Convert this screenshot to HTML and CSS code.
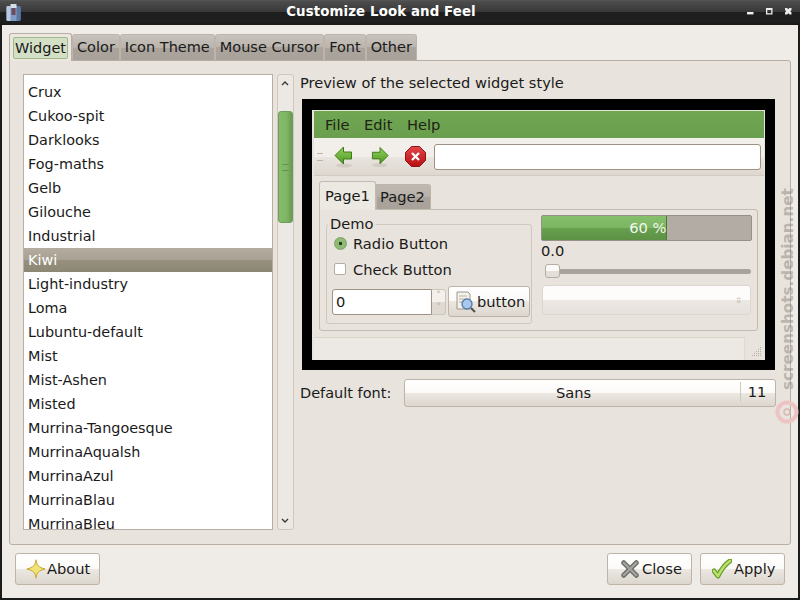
FILE: index.html
```html
<!DOCTYPE html>
<html lang="en">
<head>
<meta charset="utf-8">
<title>Customize Look and Feel</title>
<link rel="stylesheet" href="styles.css">
</head>
<body>
<div class="window">
  <header class="titlebar">
    <svg class="app-icon" width="15" height="17" viewBox="0 0 15 17"><rect x="0.5" y="2" width="14" height="15" rx="2" fill="#7f9cc4"/><rect x="0.5" y="2" width="4" height="15" rx="1" fill="#b9cbe2"/><rect x="10.5" y="2" width="4" height="15" rx="1" fill="#5a76a0"/><rect x="4.5" y="0" width="6" height="4" fill="#d5dee9"/><rect x="5.5" y="4" width="4" height="7" fill="#6e4a5c"/></svg>
    <div class="title">Customize Look and Feel</div>
    <div class="controls">
      <svg width="7" height="7" viewBox="0 0 7 7"><rect x="0" y="4" width="6.5" height="2.4" fill="#eee"/></svg>
      <svg width="7" height="7" viewBox="0 0 7 7"><path d="M0 0h6.5v6.5H0z M1.3 2v3.2h3.9V2z" fill="#eee" fill-rule="evenodd"/></svg>
      <svg width="7" height="7" viewBox="0 0 7 7"><path d="M0 0h2l1.3 1.3L4.5 0h2v2L5.2 3.3l1.3 1.2v2h-2L3.3 5.2 2 6.500H0v-2l1.300-1.200L0 2z" fill="#eee"/></svg>
    </div>
  </header>
  <main class="dialog">
    <div class="tabs">
      <div class="tab tab-active"><span class="focus">Widget</span></div>
      <div class="tab">Color</div>
      <div class="tab">Icon Theme</div>
      <div class="tab">Mouse Cursor</div>
      <div class="tab">Font</div>
      <div class="tab">Other</div>
    </div>
    <section class="page">
      <div class="listbox">
        <div class="row">Crux</div>
        <div class="row">Cukoo-spit</div>
        <div class="row">Darklooks</div>
        <div class="row">Fog-maths</div>
        <div class="row">Gelb</div>
        <div class="row">Gilouche</div>
        <div class="row">Industrial</div>
        <div class="row row-selected">Kiwi</div>
        <div class="row">Light-industry</div>
        <div class="row">Loma</div>
        <div class="row">Lubuntu-default</div>
        <div class="row">Mist</div>
        <div class="row">Mist-Ashen</div>
        <div class="row">Misted</div>
        <div class="row">Murrina-Tangoesque</div>
        <div class="row">MurrinaAqualsh</div>
        <div class="row">MurrinaAzul</div>
        <div class="row">MurrinaBlau</div>
        <div class="row">MurrinaBleu</div>
      </div>
      <div class="scrollbar">
        <svg class="arrow" width="16" height="18" viewBox="0 0 16 18"><path d="M5 10l3-3 3 3" fill="none" stroke="#3c3a36" stroke-width="1.4"/></svg>
        <div class="thumb"><span class="grip"></span></div>
        <svg class="arrow arrow-end" width="16" height="18" viewBox="0 0 16 18"><path d="M5 8l3 3 3-3" fill="none" stroke="#3c3a36" stroke-width="1.4"/></svg>
      </div>
      <div class="side">
        <div class="preview-label">Preview of the selected widget style</div>
        <div class="preview">
          <div class="demo-window">
            <div class="menubar"><span>File</span><span>Edit</span><span>Help</span></div>
            <div class="toolbar">
              <div class="handle"></div>
              <svg class="tool" width="19" height="22" viewBox="0 0 19 22"><defs><linearGradient id="go" x1="0" y1="0" x2="0" y2="1"><stop offset="0" stop-color="#96d060"/><stop offset="1" stop-color="#4a9a1e"/></linearGradient></defs><ellipse cx="10" cy="19.500" rx="8" ry="2" fill="#d2ccc4"/><path d="M1 9.500l8.500-8.500v5h8v7h-8v5z" fill="url(#go)" stroke="#3f7a16"/></svg>
              <svg class="tool tool-next" width="18" height="22" viewBox="0 0 19 22"><ellipse cx="9" cy="19.500" rx="8" ry="2" fill="#d2ccc4"/><path d="M18 9.500L9.500 1v5h-8v7h8v5z" fill="url(#go)" stroke="#3f7a16"/></svg>
              <svg class="tool tool-stop" width="21" height="21" viewBox="0 0 21 21"><defs><linearGradient id="stop" x1="0" y1="0" x2="0" y2="1"><stop offset="0" stop-color="#e2474a"/><stop offset="1" stop-color="#b80f12"/></linearGradient></defs><path d="M6.500.5h8l6 6v8l-6 6h-8l-6-6v-8z" fill="url(#stop)" stroke="#8f1214"/><path d="M7 7l7 7m0-7l-7 7" stroke="#fff" stroke-width="2.300"/></svg>
              <div class="entry"></div>
            </div>
            <div class="demo-tabs">
              <div class="demo-tab demo-tab-active">Page1</div>
              <div class="demo-tab">Page2</div>
            </div>
            <div class="demo-page">
              <fieldset class="group">
                <legend>Demo</legend>
                <label class="option"><span class="radio"></span>Radio Button</label>
                <label class="option"><span class="check"></span>Check Button</label>
                <div class="group-controls">
                  <div class="spin"><div class="spin-field">0</div><div class="spin-arrows"><i>&#708;</i><i>&#709;</i></div></div>
                  <div class="btn demo-btn">
                    <svg width="20" height="22" viewBox="0 0 20 22"><path d="M1 1h11l2 2v15H1z" fill="#f4f1ea" stroke="#9b9689"/><path d="M3 5h8M3 8h8M3 11h4" stroke="#b9b4a8"/><circle cx="11" cy="13" r="5" fill="#a9c8ee" stroke="#5c7ea8" stroke-width="1.400"/><path d="M15 17l4 4" stroke="#555" stroke-width="2.200"/></svg>
                    button
                  </div>
                </div>
              </fieldset>
              <div class="demo-right">
                <div class="progress"><div class="progress-fill" style="width:60%"><span>60 %</span></div></div>
                <div class="value">0.0</div>
                <div class="slider"><div class="slider-thumb"></div></div>
                <div class="combo"><span class="combo-arrow">&#8691;</span></div>
              </div>
            </div>
            <div class="statusbar">
              <div class="status-field"></div>
              <svg class="resize" width="12" height="12" viewBox="0 0 12 12"><path d="M10 1h1v1h-1zM8 3h1v1H8zM10 3h1v1h-1zM6 5h1v1H6zM8 5h1v1H8zM10 5h1v1h-1zM4 7h1v1H4zM6 7h1v1H6zM8 7h1v1H8zM10 7h1v1h-1zM2 9h1v1H2zM4 9h1v1H4zM6 9h1v1H6zM8 9h1v1H8zM10 9h1v1h-1z" fill="#b8b0a6"/></svg>
            </div>
          </div>
        </div>
        <div class="font-row">
          <span class="font-label">Default font:</span>
          <div class="btn font-btn"><span class="font-name">Sans</span><span class="font-size">11</span></div>
        </div>
      </div>
    </section>
    <footer class="actions">
      <div class="btn action">
        <svg width="20" height="20" viewBox="0 0 24 24"><path d="M12 1c1 7 3 9 11 11-8 2-10 4-11 11-1-7-3-9-11-11 8-2 10-4 11-11z" fill="#f2e27a" stroke="#c4a92c" stroke-width="1.200"/></svg>
        About
      </div>
      <div class="spacer"></div>
      <div class="btn action action-close">
        <svg width="18" height="18" viewBox="0 0 20 20"><path d="M3 3l14 14M17 3L3 17" stroke="#6f6f6c" stroke-width="5.500" stroke-linecap="round"/><path d="M3 3l14 14M17 3L3 17" stroke="#a3a3a0" stroke-width="2.500" stroke-linecap="round"/></svg>
        Close
      </div>
      <div class="btn action action-apply">
        <svg width="20" height="20" viewBox="0 0 20 20"><path d="M2 12l4 5c3-6 6-11 12-15" fill="none" stroke="#6e9a2c" stroke-width="5" stroke-linejoin="round" stroke-linecap="round"/><path d="M2 12l4 5c3-6 6-11 12-15" fill="none" stroke="#b6e36a" stroke-width="2.600" stroke-linejoin="round" stroke-linecap="round"/></svg>
        Apply
      </div>
    </footer>
  </main>
  <div class="watermark">screenshots.debian.net</div>
  <svg class="watermark-logo" width="26" height="26" viewBox="0 0 26 26"><circle cx="13" cy="13" r="9.500" fill="none" stroke="#ecc4c4" stroke-width="4"/><circle cx="13" cy="13" r="3" fill="none" stroke="#d8b8b4" stroke-width="1.500"/></svg>
</div>
</body>
</html>
```
FILE: styles.css
```css
* { box-sizing: border-box; }
html, body { margin: 0; padding: 0; }
body { font-family: "DejaVu Sans", sans-serif; font-size: 14.67px; color: #1a1a1a; }
.window { position: relative; width: 800px; height: 600px; background: #1c1c1c; display: flex; flex-direction: column; overflow: hidden; }

.titlebar { height: 25px; flex: none; display: flex; align-items: center; background: linear-gradient(#5a5a5a 0, #4d4d4d 1px, #383838 12px, #1f1f1f 12px, #1f1f1f 22px, #181818 100%); padding: 0 8px 0 6px; position: relative; }
.app-icon { flex: none; margin-top: -1px; }
.title { position: absolute; left: 0; right: 38px; top: 3px; text-align: center; color: #fff; font-weight: bold; font-size: 13.33px; line-height: 17px; letter-spacing: .12px; }
.controls { margin-left: auto; display: flex; gap: 12px; align-items: center; position: relative; top: -1px; }

.dialog { flex: 1; margin: 0 2px 2px; background: #efebe6; display: flex; flex-direction: column; padding: 7px 7px 0; min-height: 0; }
.tabs { display: flex; height: 28px; align-items: flex-end; flex: none; position: relative; z-index: 1; font-size: 14.5px; }
.tab { height: 26px; padding: 0 4px; line-height: 25px; background: linear-gradient(#c8c3bc, #bab4ad 50%, #aaa49d 50%, #a8a29b); border: 1px solid #bdb5ab; border-bottom: 0; border-radius: 3px 3px 0 0; white-space: nowrap; }
.tab-active { width: 63px; height: 28px; margin-bottom: -1px; padding: 3px 3px 0; line-height: 22px; background: #ece7e1; border-color: #b8aea3; }
.focus { display: block; width: 55px; height: 22px; line-height: 20px; text-align: center; background: #d4e0c6; border: 1px solid #9fb88c; border-radius: 2px; }

.page { height: 485px; flex: none; background: #e8e3dd; border: 1px solid #b8aea3; border-radius: 0 3px 3px 3px; padding: 13px 14px 13px 13px; display: flex; }
.listbox { width: 250px; height: 456px; flex: none; background: #fff; border: 1px solid #b8aea3; padding-top: 5px; overflow: hidden; }
.row { height: 24px; line-height: 25px; padding-left: 4px; white-space: nowrap; font-size: 14.4px; }
.row-selected { background: linear-gradient(#b3ac9f, #a7a093 50%, #97907f 50%, #8c8675); color: #fff; }

.scrollbar { width: 17px; height: 456px; flex: none; margin-left: 4px; background: #ece8e3; border: 1px solid #cfc7bd; border-radius: 3px; display: flex; flex-direction: column; }
.arrow { flex: none; display: block; margin-left: -1px; }
.thumb { margin: 18px 0 0; width: 15px; height: 112px; background: linear-gradient(90deg, #86bc6c, #7eb564 60%, #68994f); border: 1px solid #6e9d5a; border-radius: 3px; display: flex; align-items: center; justify-content: center; }
.grip { width: 7px; height: 7px; border-top: 1px solid #6a9155; border-bottom: 1px solid #6a9155; }
.arrow-end { margin-top: auto; }

.side { flex: 1; min-width: 0; margin-left: 6px; display: flex; flex-direction: column; }
.preview-label { height: 25px; line-height: 18px; font-size: 14.6px; white-space: nowrap; }
.preview { margin-left: 2px; width: 473px; height: 271px; background: #000; padding: 11px 10px 10px; flex: none; }
.demo-window { height: 250px; background: #e8e3dd; padding: 1px 0 0 2px; display: flex; flex-direction: column; }
.menubar { height: 27px; flex: none; background: linear-gradient(#70a552, #6a9f4e); display: flex; gap: 14.5px; padding-left: 11px; line-height: 27px; color: #1e2316; margin-right: 1px; }
.toolbar { height: 38px; flex: none; display: flex; align-items: center; background: linear-gradient(#f3f0ec, #f2efeb 50%, #e9e5df 50%, #ddd7d0); border-bottom: 1px solid #d2cbc2; margin-right: 1px; padding: 0 3px; }
.handle { width: 6px; height: 8px; margin-right: 11px; border-top: 1px solid #bdb6ac; border-bottom: 1px solid #bdb6ac; }
.tool { flex: none; }
.tool-next { margin-left: 18px; }
.tool-stop { margin-left: 16px; }
.entry { margin-left: 8px; flex: 1; height: 26px; background: #fff; border: 1px solid #9e9284; border-radius: 3px; }
.demo-tabs { display: flex; height: 28px; margin: 5px 0 0 5px; align-items: flex-end; flex: none; position: relative; z-index: 1; }
.demo-tab { width: 55px; height: 25px; padding-left: 3px; line-height: 24px; background: linear-gradient(#bfb9b2, #b6b0a9 50%, #a9a39c 50%, #a8a29b); border: 1px solid #bdb5ab; border-bottom: 0; border-radius: 0 3px 0 0; }
.demo-tab-active { width: 57px; height: 29px; margin-bottom: -1px; padding-left: 5px; line-height: 27px; background: #ece8e2; border-color: #c4bbb0; border-radius: 3px 3px 0 0; }
.demo-page { margin: 0 7px 0 5px; height: 122px; flex: none; border: 1px solid #c4bbb0; border-radius: 0 3px 3px 3px; display: flex; padding: 5px 5px 0 6px; }
.group { width: 206px; min-width: 0; height: 109px; margin: 0; padding: 0 1px 0 5px; border: 1px solid #cfc7bc; border-radius: 3px; flex: none; }
.group legend { padding: 0 2px; margin: 0 0 -3px -4px; line-height: 18px; }
.option { display: flex; align-items: center; height: 26px; padding-left: 2px; }
.radio { width: 13px; height: 13px; border-radius: 50%; margin-right: 6px; border: 1px solid #7d9f68; background: radial-gradient(circle, #2c3a20 0 1.6px, #8dbb72 2px); }
.check { width: 12px; height: 12px; margin-right: 7px; border: 1px solid #b5ada2; border-radius: 2px; background: #fff; }
.group-controls { display: flex; align-items: center; margin-top: 4px; }
.spin { width: 114px; height: 26px; display: flex; flex: none; }
.spin-field { width: 100px; background: #fff; border: 1px solid #9e9284; border-radius: 3px 0 0 3px; padding-left: 3px; line-height: 24px; }
.spin-arrows { width: 14px; border: 1px solid #cdc5ba; border-left: 0; border-radius: 0 3px 3px 0; background: linear-gradient(#f4f1ed 50%, #dfd9d2 50%); display: flex; flex-direction: column; align-items: center; font-size: 10px; line-height: 12px; color: #b8b0a6; }
.spin-arrows i { font-style: normal; height: 12px; }
.btn { display: flex; align-items: center; border: 1px solid #bdb3a7; border-radius: 3px; background: linear-gradient(#ffffff, #fbfaf8 50%, #ece8e2 50%, #dcd6ce); }
.demo-btn { margin-left: 2px; width: 82px; height: 31px; flex: none; padding-left: 7px; gap: 1px; }
.demo-right { margin-left: 9px; flex: 1; min-width: 0; }
.progress { width: 211px; height: 26px; background: #b2aca5; border: 1px solid #96908a; border-radius: 2px; }
.progress-fill { height: 24px; background: linear-gradient(#86c06b, #7cb562 50%, #67a04e 50%, #5d9145); border-right: 1px solid #4d7a39; color: #f2f6ec; text-align: right; line-height: 24px; }
.value { height: 20px; line-height: 20px; }
.slider { margin: 8px 1px 0 4px; height: 5px; background: #a9a39c; border-radius: 3px; position: relative; }
.slider-thumb { position: absolute; left: 0; top: -5px; width: 15px; height: 14px; background: linear-gradient(#fbfaf8 50%, #e4dfd8 50%); border: 1px solid #b5ada2; border-radius: 3px; }
.combo { margin: 11px 0 0 1px; width: 209px; height: 30px; border: 1px solid #dcd6ce; border-radius: 3px; background: linear-gradient(#fdfcfb 50%, #ece8e3 50%, #e6e1db); display: flex; align-items: center; justify-content: flex-end; }
.combo-arrow { font-size: 8px; color: #b5ada2; margin-right: 8px; }
.statusbar { flex: 1; display: flex; align-items: flex-end; margin-top: 5px; }
.status-field { width: 431px; height: 23px; background: #ece8e3; border-top: 1px solid #d9d3ca; border-right: 1px solid #dfd9d1; }
.resize { margin: 0 0 2px 5px; }

.font-row { display: flex; align-items: center; margin-top: 9px; }
.font-label { width: 104px; font-size: 14.5px; }
.font-btn { width: 372px; height: 28px; padding-bottom: 2px; }
.font-name { flex: 1; text-align: center; padding-left: 2px; }
.font-size { width: 35px; padding-right: 2px; text-align: center; border-left: 1px solid #cfc8be; line-height: 20px; }

.actions { flex: 1; display: flex; align-items: flex-start; padding: 8px 6px 0; }
.spacer { flex: 1; }
.action { width: 85px; height: 32px; padding: 0 0 2px 10px; gap: 1px; }
.action-close { margin-right: 8px; padding-left: 13px; gap: 3px; }
.action-apply { padding-left: 11px; gap: 2px; }
.action svg { position: relative; top: 1px; }

.watermark { position: absolute; left: 780px; top: 188px; height: 202px; writing-mode: vertical-rl; transform: rotate(180deg); font-weight: bold; font-size: 15.2px; line-height: 16px; color: rgba(130, 122, 114, .45); white-space: nowrap; }
.watermark-logo { position: absolute; left: 774px; top: 399px; }
```
